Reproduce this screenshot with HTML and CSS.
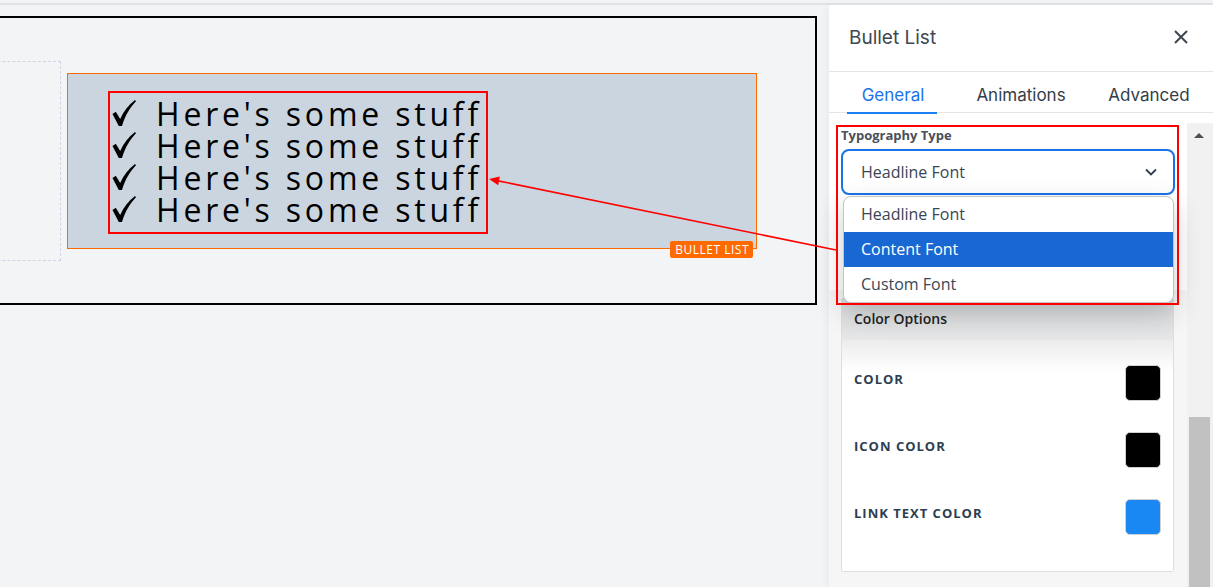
FILE: index.html
```html
<!DOCTYPE html>
<html lang="en">
<head>
<meta charset="utf-8">
<title>Bullet List editor</title>
<link rel="stylesheet" href="styles.css">
</head>
<body>
<div class="app">
  <div class="topline"></div>
  <div class="main">
    <section class="canvas">
      <div class="frame">
        <div class="dashed"></div>
        <div class="block">
          <ul class="bullets">
            <li><svg class="check" viewBox="0 0 24 26" width="24" height="26"><path d="M0.5 14 L3.8 11.8 L8.2 19 C11.5 11.5 16.5 5 23 0 L24 1.2 C18 7.5 13.2 15 10 26 L6.8 26 Z"/></svg><span>Here's some stuff</span></li>
            <li><svg class="check" viewBox="0 0 24 26" width="24" height="26"><path d="M0.5 14 L3.8 11.8 L8.2 19 C11.5 11.5 16.5 5 23 0 L24 1.2 C18 7.5 13.2 15 10 26 L6.8 26 Z"/></svg><span>Here's some stuff</span></li>
            <li><svg class="check" viewBox="0 0 24 26" width="24" height="26"><path d="M0.5 14 L3.8 11.8 L8.2 19 C11.5 11.5 16.5 5 23 0 L24 1.2 C18 7.5 13.2 15 10 26 L6.8 26 Z"/></svg><span>Here's some stuff</span></li>
            <li><svg class="check" viewBox="0 0 24 26" width="24" height="26"><path d="M0.5 14 L3.8 11.8 L8.2 19 C11.5 11.5 16.5 5 23 0 L24 1.2 C18 7.5 13.2 15 10 26 L6.8 26 Z"/></svg><span>Here's some stuff</span></li>
          </ul>
          <span class="badge">BULLET LIST</span>
        </div>
      </div>
    </section>

    <aside class="panel">
      <header class="panel-head">
        <h2 class="panel-title">Bullet List</h2>
        <svg class="close" viewBox="0 0 14 14" width="14" height="14"><path d="M1 1 L13 13 M13 1 L1 13"/></svg>
      </header>
      <nav class="tabs">
        <div class="tab active">General</div>
        <div class="tab">Animations</div>
        <div class="tab">Advanced</div>
      </nav>
      <div class="panel-body">
        <div class="scroll-content">
          <div class="section-top">
            <div class="field-label">Typography Type</div>
            <div class="select">
              <span class="select-value">Headline Font</span>
              <svg class="chev" viewBox="0 0 12 8" width="12" height="8"><path d="M1 1.5 L6 6.5 L11 1.5"/></svg>
              <div class="menu">
                <div class="menu-item">Headline Font</div>
                <div class="menu-item selected">Content Font</div>
                <div class="menu-item">Custom Font</div>
              </div>
            </div>
          </div>
          <div class="card">
            <div class="card-head">Color Options</div>
            <div class="card-body">
              <div class="color-row"><span class="color-label">Color</span><span class="swatch swatch-black"></span></div>
              <div class="color-row"><span class="color-label">Icon Color</span><span class="swatch swatch-black"></span></div>
              <div class="color-row"><span class="color-label">Link Text Color</span><span class="swatch swatch-blue"></span></div>
            </div>
          </div>
        </div>
        <div class="scrollbar">
          <div class="sb-arrow"></div>
          <div class="sb-thumb"></div>
        </div>
      </div>
      <div class="annot-box"></div>
    </aside>
  </div>

  <svg class="annot-arrow" viewBox="0 0 1213 587" width="1213" height="587">
    <line x1="836" y1="247" x2="497" y2="177.6"/>
    <polygon points="489,176 499.8,173.6 498.2,182.2"/>
  </svg>
</div>
</body>
</html>
```

FILE: styles.css
```css
* { box-sizing: border-box; }

html, body {
  margin: 0;
  padding: 0;
}

body {
  width: 1213px;
  height: 587px;
  overflow: hidden;
  background: #f3f4f6;
  font-family: "Open Sans", "Noto Sans", sans-serif;
}

.app {
  position: relative;
  width: 1213px;
  height: 587px;
}

.topline {
  height: 2px;
  margin-top: 3px;
  background: #e1e3e6;
}

.main {
  display: flex;
  height: 582px;
}

/* ---------- canvas ---------- */
.canvas {
  flex: none;
  width: 829px;
  padding-top: 11px;
  overflow: hidden;
}

.frame {
  width: 847px;
  height: 289px;
  margin-left: -30px;
  border: 2px solid #000;
  background: #f3f4f6;
  display: flex;
  align-items: center;
}

.dashed {
  flex: none;
  width: 89px;
  height: 200px;
  border: 1px dashed #cdd5e4;
}

.block {
  position: relative;
  flex: none;
  width: 690px;
  height: 176px;
  margin-left: 6px;
  padding: 17px 0 0 40px;
  background: #cbd5e0;
  border: 1px solid #ff6a00;
}

.bullets {
  list-style: none;
  margin: 0;
  width: 380px;
  padding: 5px 2px 6px 2px;
  border: 2px solid #ff0000;
  font-family: "Open Sans", sans-serif;
  font-size: 32px;
  line-height: 32.2px;
  letter-spacing: 3.8px;
  color: #000;
  white-space: nowrap;
}

.bullets li {
  height: 32.2px;
}

.check {
  display: inline-block;
  vertical-align: baseline;
  margin-right: 20px;
  fill: #000;
}

.badge {
  position: absolute;
  right: 3px;
  bottom: -10px;
  height: 17px;
  padding: 0 4px 0 5px;
  border-radius: 2px;
  background: #ff6a00;
  color: #fff;
  font-family: "Open Sans", sans-serif;
  font-size: 12px;
  letter-spacing: 0.5px;
  line-height: 17px;
}

/* ---------- panel ---------- */
.panel {
  position: relative;
  flex: none;
  width: 384px;
  background: #fff;
  display: flex;
  flex-direction: column;
  box-shadow: -3px 0 8px rgba(0, 0, 0, 0.04);
}

.panel-head {
  flex: none;
  height: 67px;
  display: flex;
  align-items: center;
  justify-content: space-between;
  padding: 0 25px 2px 20px;
  border-bottom: 1px solid #e3e5e8;
}

.panel-title {
  margin: 0;
  font-family: Inter, "Noto Sans", sans-serif;
  font-weight: 400;
  font-size: 19px;
  color: #3d4852;
}

.close {
  fill: none;
  stroke: #3d4852;
  stroke-width: 2;
}

.tabs {
  flex: none;
  display: flex;
  height: 41px;
  border-bottom: 1px solid #e3e5e8;
}

.tab {
  position: relative;
  flex: 1;
  display: flex;
  align-items: center;
  justify-content: center;
  padding-top: 5px;
  font-family: Inter, "Noto Sans", sans-serif;
  font-size: 17px;
  color: #333d47;
}

.tab.active {
  color: #1a73e8;
}

.tab.active::after {
  content: "";
  position: absolute;
  left: 18px;
  right: 20px;
  bottom: -2px;
  height: 2px;
  background: #1a7ff0;
}

.panel-body {
  flex: 1;
  display: flex;
  margin-top: 10px;
  min-height: 0;
}

.scroll-content {
  flex: 1;
  background: #f6f6f6;
}

.section-top {
  background: #fff;
  padding: 4px 12px 95px 12px;
}

.field-label {
  font-size: 13px;
  font-weight: 700;
  line-height: 17px;
  color: #4a5059;
  margin-bottom: 5px;
}

.select {
  position: relative;
  height: 46px;
  border: 2px solid #1a73e8;
  border-radius: 8px;
  display: flex;
  align-items: center;
  justify-content: space-between;
  padding: 0 16px 0 18px;
  background: #fff;
}

.select-value {
  font-size: 16px;
  color: #3a4654;
}

.chev {
  fill: none;
  stroke: #2c3e50;
  stroke-width: 1.8;
}

.menu {
  position: absolute;
  left: 0;
  top: 45px;
  width: 331px;
  border: 1px solid #c4c4c4;
  border-radius: 8px;
  background: #fff;
  overflow: hidden;
  z-index: 5;
  box-shadow: 0 10px 28px rgba(0, 0, 0, 0.2);
}

.menu-item {
  height: 35px;
  display: flex;
  align-items: center;
  padding: 0 0 2px 17px;
  font-size: 16px;
  color: #3a4654;
}

.menu-item.selected {
  background: #1967d2;
  color: #fff;
}

.card {
  margin: 8px 13px 0 12px;
  background: #fff;
  border: 1px solid #dedede;
  border-radius: 2px;
}

.card-head {
  height: 41px;
  display: flex;
  align-items: center;
  padding: 0 0 3px 12px;
  background: linear-gradient(#d9dadc, #e6e7e8);
  font-size: 14px;
  font-weight: 600;
  color: #222;
}

.card-body {
  padding: 25px 12px 36px 12px;
  display: flex;
  flex-direction: column;
  gap: 31px;
  background: linear-gradient(#ececec, #fff 32px);
}

.color-row {
  display: flex;
  justify-content: space-between;
  align-items: flex-start;
}

.color-label {
  margin-top: 5px;
  font-size: 13px;
  font-weight: 700;
  line-height: 18px;
  letter-spacing: 1px;
  text-transform: uppercase;
  color: #2c3e50;
}

.swatch {
  width: 36px;
  height: 36px;
  border: 1px solid #d0d0d0;
  border-radius: 5px;
}

.swatch-black { background: #000; }
.swatch-blue { background: #1a88f2; }

.scrollbar {
  flex: none;
  width: 26px;
  background: #f1f1f1;
  display: flex;
  flex-direction: column;
}

.sb-arrow {
  width: 0;
  height: 0;
  margin: 10px 0 0 7px;
  border-left: 5.5px solid transparent;
  border-right: 5.5px solid transparent;
  border-bottom: 5px solid #505050;
}

.sb-thumb {
  margin: auto 3px 0 2px;
  height: 170px;
  background: #c1c1c1;
}

.annot-box {
  position: absolute;
  left: 7px;
  top: 120px;
  width: 343px;
  height: 180px;
  border: 2px solid #ff0000;
  z-index: 10;
  pointer-events: none;
}

.annot-arrow {
  position: absolute;
  left: 0;
  top: 0;
  pointer-events: none;
  z-index: 20;
}

.annot-arrow line {
  stroke: #ff0000;
  stroke-width: 1.6;
}

.annot-arrow polygon {
  fill: #ff0000;
}
```
